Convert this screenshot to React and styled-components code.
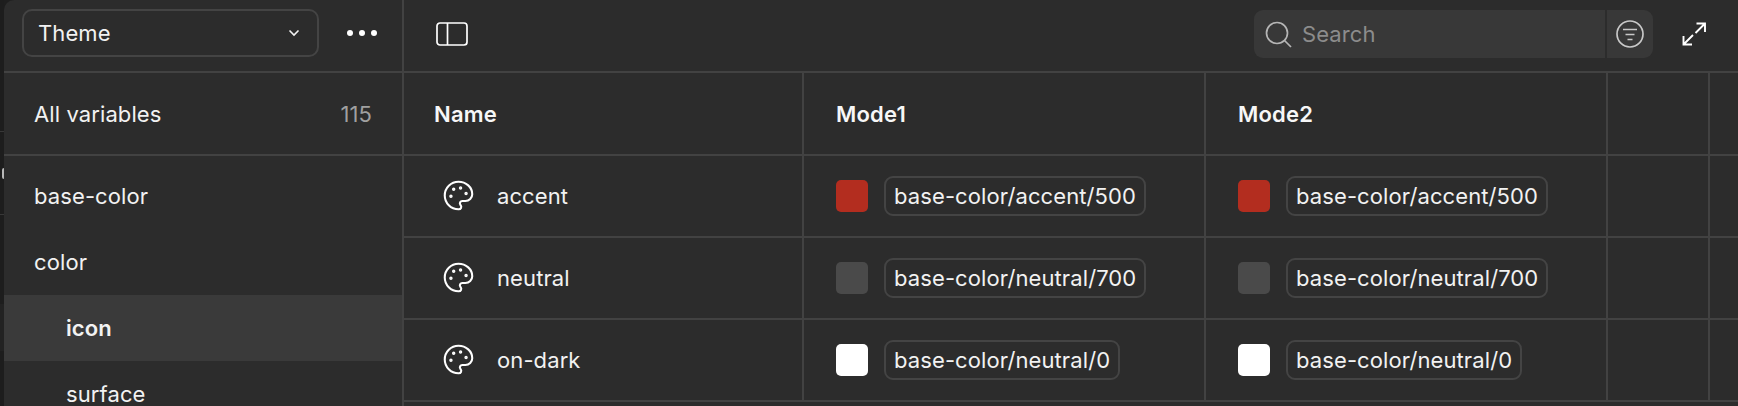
import styled, { createGlobalStyle } from 'styled-components';
import { Palette } from 'lucide-react';

const LINE = '#424242';

const Global = createGlobalStyle`
  html, body { margin: 0; padding: 0; background: #1e1e1e; overflow: hidden; }
  body { font-family: Inter, "Liberation Sans", sans-serif; color: #fff; }
`;

const Page = styled.div`
  display: flex;
  width: 1738px;
  height: 406px;
  overflow: hidden;
`;

const BackStrip = styled.div`
  width: 4px;
  flex: none;
  display: flex;
  flex-direction: column;
`;

const StripPart = styled.div`
  height: ${p => p.$h}px;
  flex: none;
  background: ${p => p.$bg || '#1d1d1d'};
  border-bottom: ${p => (p.$line ? '1px solid #383838' : '0')};
  display: flex;
  align-items: center;
  justify-content: flex-end;
`;

const Sliver = styled.span`
  width: 2px;
  height: 11px;
  border-radius: 2px 0 0 2px;
  background: #b8b8b8;
`;

const Shell = styled.div`
  flex: 1;
  display: grid;
  grid-template-columns: 400px 1fr;
  background: #2c2c2c;
  border-top-left-radius: 10px;
  overflow: hidden;
`;

const Sidebar = styled.aside`
  border-right: 2px solid ${LINE};
  display: flex;
  flex-direction: column;
`;

const SideTop = styled.div`
  height: 71px;
  border-bottom: 2px solid ${LINE};
  display: flex;
  align-items: center;
  padding-left: 18px;
  flex: none;
`;

const ThemeSelect = styled.div`
  width: 297px;
  height: 48px;
  margin-bottom: 5px;
  box-sizing: border-box;
  border: 2px solid #444;
  border-radius: 10px;
  display: flex;
  align-items: center;
  justify-content: space-between;
  padding: 0 17px 0 14px;
  font-size: 22px;
  letter-spacing: 0.1px;
  color: #f2f2f2;
`;

const MoreButton = styled.div`
  display: flex;
  gap: 6px;
  margin-left: 28px;
  margin-bottom: 5px;
`;

const Dot = styled.span`
  width: 6px;
  height: 6px;
  border-radius: 50%;
  background: #fff;
`;

const AllRow = styled.div`
  height: 81px;
  border-bottom: 2px solid ${LINE};
  display: flex;
  align-items: center;
  justify-content: space-between;
  padding: 0 30px;
  font-size: 22px;
  letter-spacing: 0.1px;
  color: #f2f2f2;
  flex: none;
`;

const Count = styled.span`
  color: #a0a0a0;
`;

const GroupList = styled.div`
  padding-top: 7px;
`;

const Group = styled.div`
  height: 66px;
  display: flex;
  align-items: center;
  font-size: 22px;
  line-height: 24px;
  letter-spacing: 0.1px;
  color: #f2f2f2;
  padding-left: ${p => (p.$nested ? 62 : 30)}px;
  font-weight: ${p => (p.$active ? 600 : 400)};
  background: ${p => (p.$active ? '#3a3a3a' : 'transparent')};
`;

const Main = styled.main`
  display: flex;
  flex-direction: column;
  min-width: 0;
`;

const Toolbar = styled.div`
  height: 68px;
  border-bottom: 2px solid ${LINE};
  display: flex;
  align-items: center;
  padding: 0 32px 3px 32px;
  flex: none;
`;

const SearchBox = styled.div`
  margin-left: auto;
  width: 399px;
  height: 48px;
  border-radius: 9px;
  background: #383838;
  display: flex;
  align-items: center;
  overflow: hidden;
`;

const SearchField = styled.div`
  flex: 1;
  height: 100%;
  display: flex;
  align-items: center;
  gap: 10px;
  padding-left: 11px;
  font-size: 22px;
  letter-spacing: 0.1px;
  color: #8c8c8c;
  border-right: 2px solid #2c2c2c;
`;

const FilterSlot = styled.div`
  width: 46px;
  display: flex;
  justify-content: center;
`;

const ExpandSlot = styled.div`
  margin-left: 29px;
  display: flex;
`;

const Row = styled.div`
  display: grid;
  grid-template-columns: 400px 402px 402px 102px 1fr;
  height: ${p => (p.$head ? 81 : 80)}px;
  border-bottom: 2px solid ${LINE};
  flex: none;
`;

const Cell = styled.div`
  display: flex;
  align-items: center;
  border-right: 2px solid ${LINE};
  padding-left: ${p => p.$pad ?? 32}px;
  &:last-child { border-right: 0; }
`;

const HeadLabel = styled.span`
  font-size: 22px;
  font-weight: 600;
  letter-spacing: 0.2px;
  color: #f7f7f7;
`;

const VarIcon = styled.span`
  display: flex;
  margin-top: -2px;
  margin-right: 22px;
`;

const VarName = styled.span`
  font-size: 22px;
  letter-spacing: 0.1px;
  color: #f2f2f2;
`;

const Swatch = styled.span`
  width: 32px;
  height: 32px;
  border-radius: 5px;
  background: ${p => p.$color};
  margin-right: 16px;
  flex: none;
`;

const Chip = styled.span`
  box-sizing: border-box;
  height: 40px;
  display: inline-flex;
  align-items: center;
  padding: 0 8px;
  border: 2px solid #444;
  border-radius: 9px;
  font-size: 22px;
  letter-spacing: 0.1px;
  color: #f2f2f2;
`;

const SidePanelIcon = () => (
  <svg width="32" height="24" viewBox="0 0 32 24" fill="none" stroke="#fff" strokeWidth="1.7">
    <rect x="1" y="1" width="30" height="22" rx="3" />
    <line x1="11.5" y1="1" x2="11.5" y2="23" />
  </svg>
);

const Chevron = () => (
  <svg width="12" height="8" viewBox="0 0 12 8" fill="none" stroke="#f2f2f2" strokeWidth="1.6">
    <path d="M1.5 1.5 6 6l4.5-4.5" />
  </svg>
);

const SearchIcon = () => (
  <svg width="27" height="27" viewBox="0 0 27 27" fill="none" stroke="#b5b5b5" strokeWidth="1.7">
    <circle cx="12" cy="12" r="10.5" />
    <line x1="19.5" y1="19.5" x2="26" y2="26" />
  </svg>
);

const FilterIcon = () => (
  <svg width="28" height="28" viewBox="0 0 28 28" fill="none" stroke="#c8c8c8" strokeWidth="1.7">
    <circle cx="14" cy="14" r="13" />
    <line x1="7" y1="9.5" x2="21" y2="9.5" />
    <line x1="9.5" y1="14.5" x2="18.5" y2="14.5" />
    <line x1="11.5" y1="19.5" x2="16.5" y2="19.5" />
  </svg>
);

const ExpandIcon = () => (
  <svg width="24" height="24" viewBox="0 0 24 24" fill="none" stroke="#fff" strokeWidth="1.9">
    <path d="M14.5 1.5h8.5V10M23 1.5 13.5 11M1.5 14v8.5H10M1.5 22.5 11 13" />
  </svg>
);

const groups = [
  { name: 'base-color' },
  { name: 'color' },
  { name: 'icon', nested: true, active: true },
  { name: 'surface', nested: true },
];

const variables = [
  { name: 'accent', color: '#b32d1f', value: 'base-color/accent/500' },
  { name: 'neutral', color: '#4a4a4a', value: 'base-color/neutral/700' },
  { name: 'on-dark', color: '#ffffff', value: 'base-color/neutral/0' },
];

export default function App() {
  return (
    <>
      <Global />
      <Page>
        <BackStrip>
          <StripPart $h={131} $line />
          <StripPart $h={82} $line>
            <Sliver />
          </StripPart>
          <StripPart $h={89} />
          <StripPart $h={47} $bg="#222222" />
          <StripPart $h={57} />
        </BackStrip>
        <Shell>
          <Sidebar>
            <SideTop>
              <ThemeSelect>
                Theme
                <Chevron />
              </ThemeSelect>
              <MoreButton>
                <Dot />
                <Dot />
                <Dot />
              </MoreButton>
            </SideTop>
            <AllRow>
              All variables
              <Count>115</Count>
            </AllRow>
            <GroupList>
              {groups.map(g => (
                <Group key={g.name} $nested={g.nested} $active={g.active}>{g.name}</Group>
              ))}
            </GroupList>
          </Sidebar>
          <Main>
            <Toolbar>
              <SidePanelIcon />
              <SearchBox>
                <SearchField>
                  <SearchIcon />
                  Search
                </SearchField>
                <FilterSlot>
                  <FilterIcon />
                </FilterSlot>
              </SearchBox>
              <ExpandSlot>
                <ExpandIcon />
              </ExpandSlot>
            </Toolbar>
            <Row $head>
              <Cell $pad={30}><HeadLabel>Name</HeadLabel></Cell>
              <Cell><HeadLabel>Mode1</HeadLabel></Cell>
              <Cell><HeadLabel>Mode2</HeadLabel></Cell>
              <Cell />
              <Cell />
            </Row>
            {variables.map(v => (
              <Row key={v.name}>
                <Cell $pad={38}>
                  <VarIcon><Palette size={33} strokeWidth={1.5} color="#fff" /></VarIcon>
                  <VarName>{v.name}</VarName>
                </Cell>
                <Cell>
                  <Swatch $color={v.color} />
                  <Chip>{v.value}</Chip>
                </Cell>
                <Cell>
                  <Swatch $color={v.color} />
                  <Chip>{v.value}</Chip>
                </Cell>
                <Cell />
                <Cell />
              </Row>
            ))}
          </Main>
        </Shell>
      </Page>
    </>
  );
}
